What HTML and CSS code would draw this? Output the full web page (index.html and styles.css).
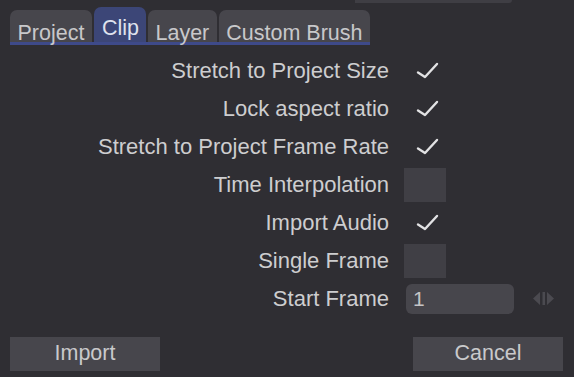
FILE: index.html
```html
<!DOCTYPE html>
<html>
<head>
<meta charset="utf-8">
<link rel="stylesheet" href="styles.css">
</head>
<body>
<div class="strip"></div>
<div class="tabs">
  <div class="tab">Project</div>
  <div class="tab active">Clip</div>
  <div class="tab">Layer</div>
  <div class="tab">Custom Brush</div>
</div>
<div class="form">
  <div class="label">Stretch to Project Size</div>
  <div class="ctl"><svg class="check" width="24" height="18" viewBox="0 0 24 18"><polyline points="2,10.5 9,15 21,2" /></svg></div>
  <div class="label">Lock aspect ratio</div>
  <div class="ctl"><svg class="check" width="24" height="18" viewBox="0 0 24 18"><polyline points="2,10.5 9,15 21,2" /></svg></div>
  <div class="label">Stretch to Project Frame Rate</div>
  <div class="ctl"><svg class="check" width="24" height="18" viewBox="0 0 24 18"><polyline points="2,10.5 9,15 21,2" /></svg></div>
  <div class="label">Time Interpolation</div>
  <div class="ctl"><div class="box"></div></div>
  <div class="label">Import Audio</div>
  <div class="ctl"><svg class="check" width="24" height="18" viewBox="0 0 24 18"><polyline points="2,10.5 9,15 21,2" /></svg></div>
  <div class="label">Single Frame</div>
  <div class="ctl"><div class="box"></div></div>
  <div class="label">Start Frame</div>
  <div class="ctl">
    <div class="input">1</div>
    <svg class="spin" width="22" height="13" viewBox="0 0 22 13"><polygon points="7,0 0,6.5 7,13" /><rect x="9.5" y="0" width="2.5" height="13" /><polygon points="14,0 21,6.5 14,13" /></svg>
  </div>
</div>
<div class="footer">
  <div class="btn">Import</div>
  <div class="btn">Cancel</div>
</div>
</body>
</html>
```
FILE: styles.css
```css
html, body {
  margin: 0;
  padding: 0;
  background: #2f2e33;
  width: 574px;
  height: 377px;
  overflow: hidden;
  font-family: "Liberation Sans", Arial, sans-serif;
  color: #cdcdcf;
}
.strip {
  margin-left: 355px;
  width: 157px;
  height: 3px;
  background: #3f3e44;
  border-bottom-right-radius: 3px;
}
.tabs {
  display: flex;
  align-items: flex-end;
  margin: 4px 0 0 10px;
  width: 360px;
  border-bottom: 3px solid #3e4a8a;
  gap: 2px;
}
.tab {
  background: #47464c;
  border-radius: 7px 7px 0 0;
  height: 32px;
  padding: 10px 7.5px 0;
  font-size: 21.5px;
  line-height: 26px;
  color: #c8c8ca;
  box-sizing: border-box;
  white-space: nowrap;
}
.tab.active {
  background: #3c4677;
  height: 35px;
  padding: 8px 7px 0 8px;
  color: #dfe2ee;
}
.form {
  display: grid;
  grid-template-columns: 389px 1fr;
  grid-auto-rows: 38px;
  column-gap: 15px;
  margin-top: 6.5px;
}
.label {
  text-align: right;
  font-size: 22px;
  line-height: 38px;
  white-space: nowrap;
}
.ctl {
  display: flex;
  align-items: center;
}
.check {
  margin-left: 12px;
  fill: none;
  stroke: #e2e2e4;
  stroke-width: 2.4;
  stroke-linecap: round;
  stroke-linejoin: round;
}
.box {
  width: 42px;
  height: 34px;
  background: #403f45;
}
.input {
  margin-left: 2px;
  width: 108px;
  height: 30px;
  border-radius: 6px;
  background: #47464c;
  box-sizing: border-box;
  padding-left: 7px;
  font-size: 21px;
  line-height: 30px;
  color: #c4c4c6;
}
.spin {
  margin-left: 19px;
  fill: #4b4a50;
}
.footer {
  display: flex;
  justify-content: space-between;
  padding: 0 11px 0 10px;
  margin-top: 19px;
}
.btn {
  width: 150px;
  height: 34px;
  background: #47464c;
  font-size: 21.5px;
  line-height: 33px;
  text-align: center;
  color: #c9c9cb;
}
```
